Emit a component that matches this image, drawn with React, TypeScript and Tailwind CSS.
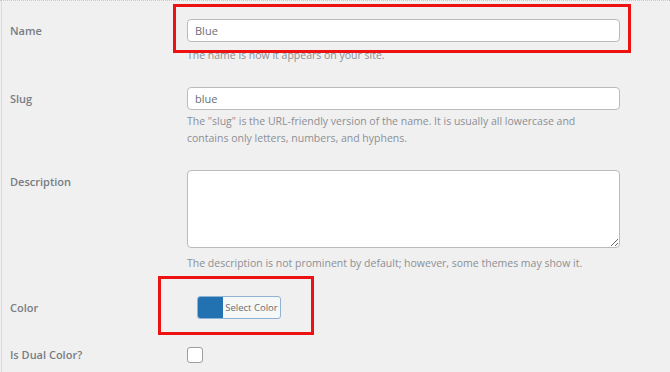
import React from 'react';

const font = { fontFamily: '"Open Sans", "Noto Sans", sans-serif' };

const Label: React.FC<{ children: React.ReactNode; className?: string }> = ({ children, className }) => (
  <div className={`pl-[8px] text-[11px] font-semibold text-[#787c82] ${className ?? ''}`}>{children}</div>
);

const Help: React.FC<{ children: React.ReactNode; className?: string }> = ({ children, className }) => (
  <p className={`text-[10.5px] text-[#8c8f94] ${className ?? ''}`}>{children}</p>
);

const App: React.FC = () => {
  return (
    <div className="relative h-[372px] w-[670px] overflow-hidden bg-[#f0f0f1]" style={font}>
      <div className="h-full border-t border-dotted border-[#c9c9c9]">
        <div className="ml-px h-full border-l border-[#dcdcde] pt-[18px]">
          {/* Name */}
          <div className="grid grid-cols-[185px_433px]">
            <Label className="leading-[23px]">Name</Label>
            <div>
              <input
                readOnly
                value="Blue"
                className="block h-[23px] w-full rounded-[4px] border border-[#b9bbbe] bg-white px-[7px] text-[11px] text-[#6b6e72] outline-none"
              />
              <Help className="mt-[5px] leading-[16px]">The name is how it appears on your site.</Help>
            </div>
          </div>

          {/* Slug */}
          <div className="mt-[24px] grid grid-cols-[185px_433px]">
            <Label className="leading-[23px]">Slug</Label>
            <div>
              <input
                readOnly
                value="blue"
                className="block h-[23px] w-full rounded-[4px] border border-[#b9bbbe] bg-white px-[7px] text-[11px] text-[#6b6e72] outline-none"
              />
              <Help className="mt-[3px] w-[400px] leading-[17px]">
                The &quot;slug&quot; is the URL-friendly version of the name. It is usually all lowercase and contains only
                letters, numbers, and hyphens.
              </Help>
            </div>
          </div>

          {/* Description */}
          <div className="mt-[23px] grid grid-cols-[185px_433px]">
            <Label className="leading-[23px]">Description</Label>
            <div>
              <textarea
                readOnly
                className="block h-[78px] w-full rounded-[4px] border border-[#b9bbbe] bg-white outline-none"
              />
              <Help className="mt-[7px] leading-[16px]">
                The description is not prominent by default; however, some themes may show it.
              </Help>
            </div>
          </div>

          {/* Color */}
          <div className="mt-[25px] grid grid-cols-[185px_433px]">
            <Label className="leading-[23px]">Color</Label>
            <div>
              <button className="ml-[10px] flex h-[23px] w-[84px] overflow-hidden rounded-[3px] border border-[#8fb3d6] bg-[#f6f7f7]">
                <span className="h-full w-[25px] bg-[#2271b1]" />
                <span className="flex-1 text-[9.5px] leading-[21px] text-[#6b6e72]">Select Color</span>
              </button>
            </div>
          </div>

          {/* Dual color */}
          <div className="mt-[28px] grid grid-cols-[185px_433px]">
            <Label className="leading-[16px]">Is Dual Color?</Label>
            <div>
              <span className="block h-[16px] w-[16px] rounded-[3px] border border-[#9a9da1] bg-white" />
            </div>
          </div>
        </div>
      </div>

      {/* highlight boxes */}
      <div className="pointer-events-none absolute left-[173px] top-[4px] h-[49px] w-[458px] border-[3px] border-[#ee1111]" />
      <div className="pointer-events-none absolute left-[158px] top-[276px] h-[59px] w-[156px] border-[3px] border-[#ee1111]" />
    </div>
  );
};

export default App;
